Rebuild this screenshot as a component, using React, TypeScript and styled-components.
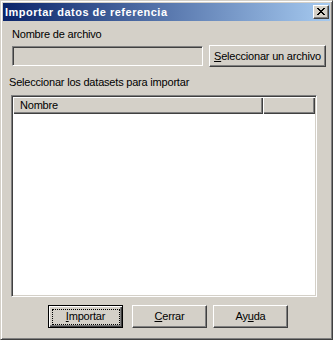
import React from 'react';
import styled, { createGlobalStyle } from 'styled-components';

// Classic Windows 2000 palette
const FACE = '#d4d0c8';
const SHADOW = '#808080';
const DARK = '#404040';

const GlobalStyle = createGlobalStyle`
  html, body {
    margin: 0;
    padding: 0;
    background: ${FACE};
  }
  * {
    box-sizing: border-box;
  }
`;

const Window = styled.div`
  width: 333px;
  height: 340px;
  padding: 2px;
  background: ${FACE};
  border: 1px solid;
  border-color: ${FACE} ${DARK} ${DARK} ${FACE};
  box-shadow: inset 1px 1px #fff, inset -1px -1px ${SHADOW};
  display: flex;
  flex-direction: column;
  font-family: 'Liberation Sans', Arial, sans-serif;
  font-size: 11px;
  line-height: 13px;
  letter-spacing: -0.2px;
  color: #000;
`;

const TitleBar = styled.div`
  height: 18px;
  display: flex;
  align-items: center;
  justify-content: space-between;
  padding: 0 1px 0 2px;
  background: linear-gradient(to right, #0a246a, #a6caf0);
`;

const TitleText = styled.span`
  color: #fff;
  font-weight: bold;
  font-size: 11px;
  letter-spacing: 0.5px;
`;

const CloseButton = styled.div`
  width: 16px;
  height: 14px;
  background: ${FACE};
  border: 1px solid;
  border-color: #fff ${DARK} ${DARK} #fff;
  box-shadow: inset -1px -1px ${SHADOW};
  display: flex;
  align-items: flex-start;
  padding: 2px 0 0 3px;
`;

const Body = styled.div`
  display: flex;
  flex-direction: column;
  padding-left: 6px;
`;

const Label = styled.div<{ $indent?: number; $top: number }>`
  margin-left: ${(p) => p.$indent ?? 0}px;
  margin-top: ${(p) => p.$top}px;
  white-space: nowrap;
`;

const FileRow = styled.div`
  margin-top: 4px;
  display: flex;
  align-items: center;
  gap: 6px;
  padding-left: 3px;
`;

const SunkenField = styled.div`
  width: 191px;
  height: 20px;
  background: ${FACE};
  border: 1px solid;
  border-color: ${SHADOW} #fff #fff ${SHADOW};
  box-shadow: inset 1px 1px ${DARK}, inset -1px -1px ${FACE};
`;

const PushButton = styled.button<{ $width: number; $height: number; $ml?: number; $default?: boolean }>`
  position: relative;
  width: ${(p) => p.$width}px;
  height: ${(p) => p.$height}px;
  margin: 0 0 0 ${(p) => p.$ml ?? 0}px;
  padding: 0;
  background: ${FACE};
  font: inherit;
  letter-spacing: inherit;
  color: #000;
  white-space: nowrap;
  border: 1px solid;
  ${(p) =>
    p.$default
      ? `
    border-color: #000;
    box-shadow: inset 1px 1px #fff, inset -1px -1px ${DARK}, inset -2px -2px ${SHADOW};
    &::after {
      content: '';
      position: absolute;
      top: 3px;
      left: 3px;
      right: 2px;
      bottom: 2px;
      border: 1px dotted #000;
    }
  `
      : `
    border-color: #fff ${DARK} ${DARK} #fff;
    box-shadow: inset -1px -1px ${SHADOW};
  `}

  u {
    text-decoration: underline;
    text-underline-offset: 1px;
  }
`;

const ListBox = styled.div`
  margin: 6px 0 0 2px;
  width: 306px;
  height: 202px;
  background: #fff;
  border: 1px solid;
  border-color: ${SHADOW} #fff #fff ${SHADOW};
  box-shadow: inset 1px 1px ${DARK}, inset -1px -1px ${FACE};
  padding: 1px;
  display: flex;
  flex-direction: column;
`;

const HeaderRow = styled.div`
  display: flex;
  height: 17px;
`;

const HeaderCell = styled.div<{ $width?: number }>`
  ${(p) => (p.$width ? `width: ${p.$width}px;` : 'flex: 1;')}
  height: 17px;
  background: ${FACE};
  box-shadow: inset 1px 1px #fff, inset -1px -1px ${DARK}, inset -2px -2px ${SHADOW};
  padding: 2px 0 0 7px;
`;

const ButtonRow = styled.div`
  display: flex;
  margin-top: 8px;
  padding-left: 39px;
`;

const CloseGlyph = () => (
  <svg width="8" height="7" viewBox="0 0 8 7" shapeRendering="crispEdges">
    <path
      fill="#000"
      d="M0 0h2v1H0zM6 0h2v1H6zM1 1h2v1H1zM5 1h2v1H5zM2 2h4v1H2zM3 3h2v1H3zM2 4h4v1H2zM1 5h2v1H1zM5 5h2v1H5zM0 6h2v1H0zM6 6h2v1H6z"
    />
  </svg>
);

export default function App() {
  return (
    <>
      <GlobalStyle />
      <Window>
        <TitleBar>
          <TitleText>Importar datos de referencia</TitleText>
          <CloseButton>
            <CloseGlyph />
          </CloseButton>
        </TitleBar>

        <Body>
          <Label $indent={3} $top={7}>Nombre de archivo</Label>
          <FileRow>
            <SunkenField />
            <PushButton $width={117} $height={22}>
              <u>S</u>eleccionar un archivo
            </PushButton>
          </FileRow>

          <Label $top={9}>Seleccionar los datasets para importar</Label>
          <ListBox>
            <HeaderRow>
              <HeaderCell $width={250}>Nombre</HeaderCell>
              <HeaderCell />
            </HeaderRow>
          </ListBox>

          <ButtonRow>
            <PushButton $width={75} $height={23} $default>
              <u>I</u>mportar
            </PushButton>
            <PushButton $width={75} $height={23} $ml={9}>
              <u>C</u>errar
            </PushButton>
            <PushButton $width={75} $height={23} $ml={6}>
              Ay<u>u</u>da
            </PushButton>
          </ButtonRow>
        </Body>
      </Window>
    </>
  );
}
